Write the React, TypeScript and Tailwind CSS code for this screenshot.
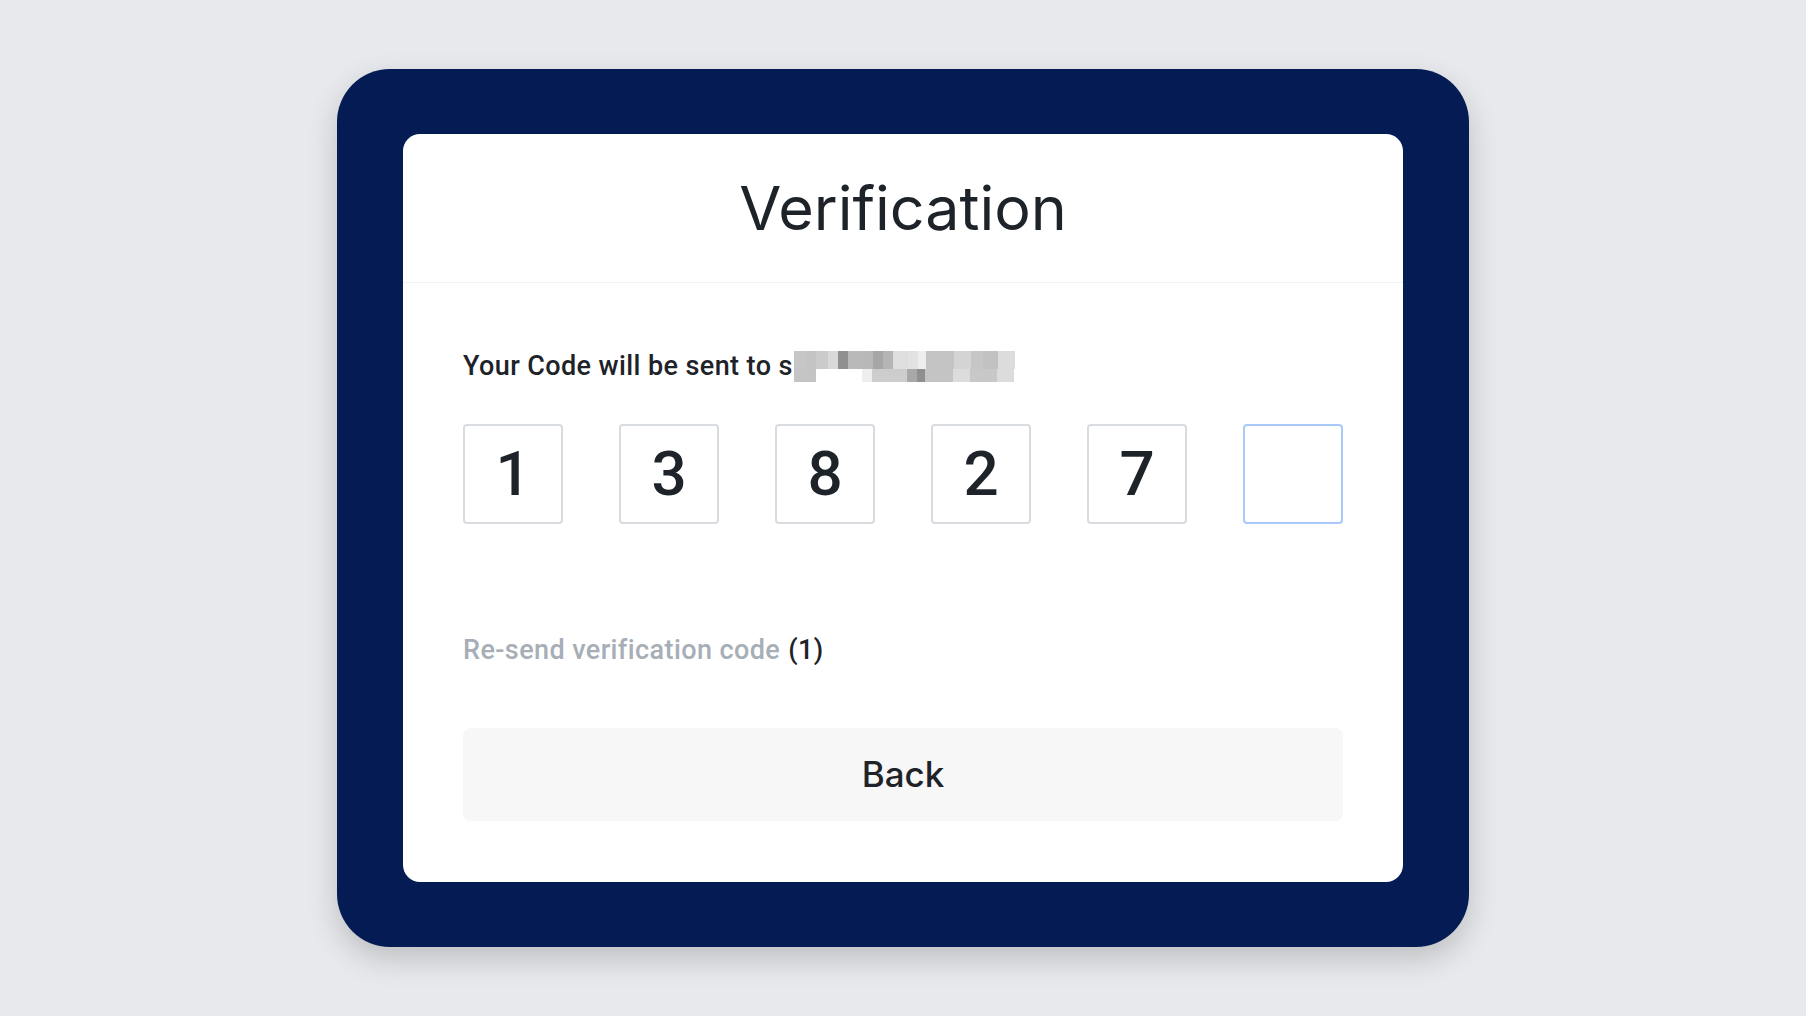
const row1 = [
  { w: "w-[12px]", c: "bg-[#c6c6c6]" },
  { w: "w-[10px]", c: "bg-[#c4c4c4]" },
  { w: "w-[12px]", c: "bg-[#cbcbcb]" },
  { w: "w-[10px]", c: "bg-[#d9d9d9]" },
  { w: "w-[10px]", c: "bg-[#909090]" },
  { w: "w-[15px]", c: "bg-[#b9b9b9]" },
  { w: "w-[10px]", c: "bg-[#b8b8b8]" },
  { w: "w-[10px]", c: "bg-[#a6a6a6]" },
  { w: "w-[10px]", c: "bg-[#b5b5b5]" },
  { w: "w-[15px]", c: "bg-[#dedede]" },
  { w: "w-[10px]", c: "bg-[#e2e2e2]" },
  { w: "w-[8px]", c: "bg-[#eeeeee]" },
  { w: "w-[28px]", c: "bg-[#c4c4c4]" },
  { w: "w-[17px]", c: "bg-[#d4d4d4]" },
  { w: "w-[12px]", c: "bg-[#c6c6c6]" },
  { w: "w-[15px]", c: "bg-[#c2c2c2]" },
  { w: "w-[17px]", c: "bg-[#dcdcdc]" },
];

const row2 = [
  { w: "w-[22px]", c: "bg-[#c4c4c4]" },
  { w: "w-[46px]", c: "bg-white" },
  { w: "w-[10px]", c: "bg-[#eeeeee]" },
  { w: "w-[35px]", c: "bg-[#cdcdcd]" },
  { w: "w-[10px]", c: "bg-[#a8a8a8]" },
  { w: "w-[8px]", c: "bg-[#8f8f8f]" },
  { w: "w-[28px]", c: "bg-[#c4c4c4]" },
  { w: "w-[17px]", c: "bg-[#dcdcdc]" },
  { w: "w-[27px]", c: "bg-[#c8c8c8]" },
  { w: "w-[17px]", c: "bg-[#dcdcdc]" },
];

const digits = ["1", "3", "8", "2", "7", ""];

export default function App() {
  return (
    <div className="flex h-screen w-full items-center justify-center bg-[#e7e9ec]">
      <div className="rounded-[53px] bg-[#041b54] px-[66px] pt-[65px] pb-[65px] shadow-[0_12px_30px_rgba(0,0,0,0.18)]">
        <div className="flex w-[1000px] flex-col rounded-[17px] bg-white">
          {/* header */}
          <div className="flex h-[149px] items-center justify-center border-b border-[#f0f1f2]">
            <h1 className="font-['Inter',sans-serif] text-[61px] font-normal leading-none text-[#1e2329]">
              Verification
            </h1>
          </div>

          <div className="px-[60px] pb-[61px] font-['Roboto',sans-serif] text-[#1e2329]">
            <div className="mt-[63px] flex h-[40px] items-center">
              <span className="text-[27px] font-medium leading-[40px] tracking-[0.4px]">Your Code will be sent to s</span>
              <div className="ml-[1px] flex flex-col">
                <div className="flex h-[18px]">
                  {row1.map((b, i) => (
                    <div key={i} className={`${b.w} ${b.c} h-full`} />
                  ))}
                </div>
                <div className="flex h-[13px]">
                  {row2.map((b, i) => (
                    <div key={i} className={`${b.w} ${b.c} h-full`} />
                  ))}
                </div>
              </div>
            </div>

            <div className="mt-[38px] flex justify-between">
              {digits.map((d, i) => (
                <div
                  key={i}
                  className={`flex h-[100px] w-[100px] items-center justify-center rounded-[4px] border-2 text-[62px] font-medium leading-none ${
                    d === "" ? "border-[#a9c9fa]" : "border-[#d8dbdf]"
                  }`}
                >
                  {d}
                </div>
              ))}
            </div>

            <div className="mt-[106px] flex h-[40px] items-center text-[27px] font-medium leading-[40px] tracking-[0.4px]">
              <span className="text-[#a7aeb7]">Re-send verification code</span>
              <span className="ml-[8px] text-[#1e2329]">(1)</span>
            </div>

            <button className="mt-[58px] flex h-[93px] w-full items-center justify-center rounded-[8px] bg-[#f7f7f7] font-['Inter',sans-serif] text-[35px] font-medium text-[#1e2329]">
              Back
            </button>
          </div>
        </div>
      </div>
    </div>
  );
}
